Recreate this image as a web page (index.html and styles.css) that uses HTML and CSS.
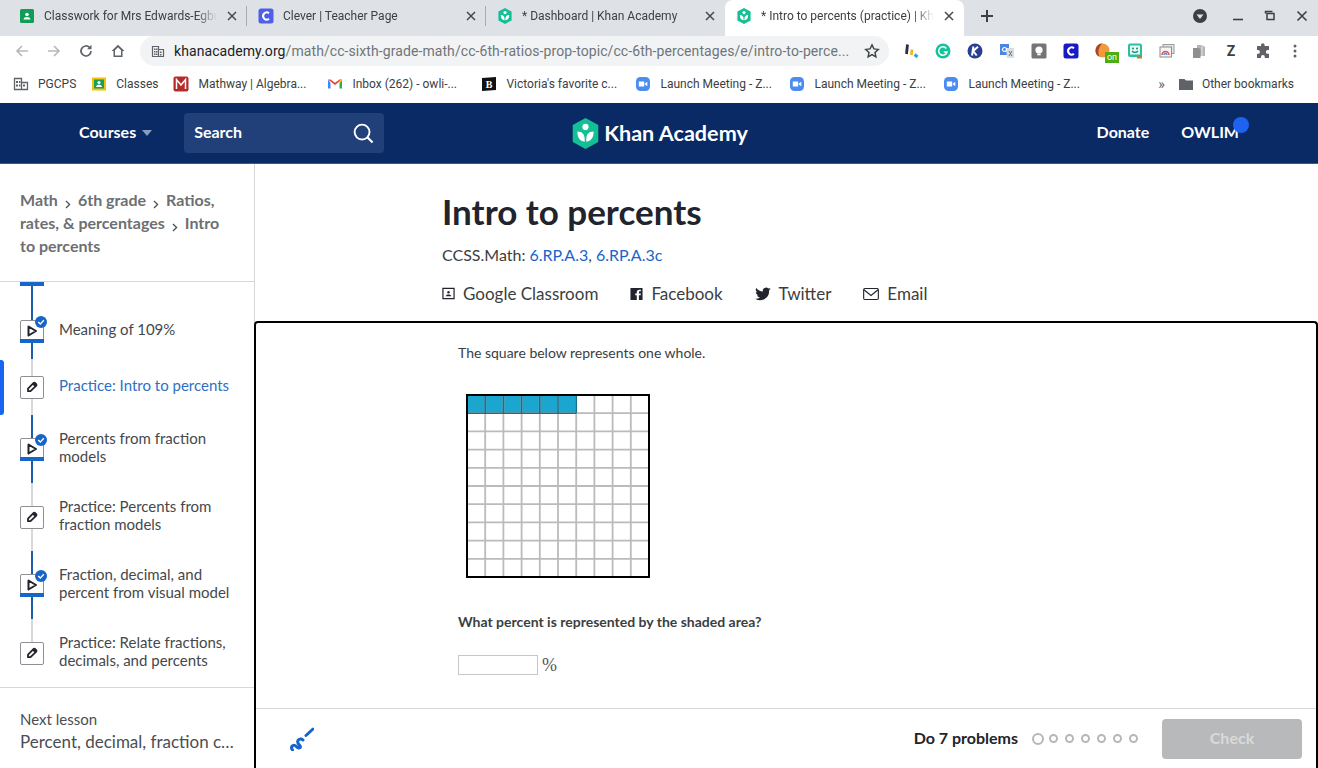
FILE: index.html
```html
<!DOCTYPE html>
<html lang="en">
<head>
<meta charset="utf-8">
<title>Intro to percents (practice) | Khan Academy</title>
<link rel="stylesheet" href="styles.css">
</head>
<body>
<svg class="defs" aria-hidden="true">
  <symbol id="x" viewBox="0 0 12 12"><path d="M2 2l8 8M10 2l-8 8" fill="none" stroke="#45484c" stroke-width="1.5"/></symbol>
  <symbol id="ka" viewBox="0 0 16 16"><path d="M8 0l6.600 3.600v8.800L8 16l-6.600-3.600V3.600z" fill="#14bf96"/><circle cx="8" cy="4.600" r="1.600" fill="#fff"/><path d="M3.800 7c2.400 0 3.800 1.400 3.800 4v1.200C5 12 3.800 10 3.800 7zM12.200 7c-2.400 0-3.800 1.400-3.800 4v1.200C11 12 12.200 10 12.200 7z" fill="#fff"/></symbol>
  <symbol id="zoom" viewBox="0 0 16 16"><rect x="1" y="1" width="14" height="14" rx="4.500" fill="#4a8cf0"/><path d="M3.800 5.600h5.400v4.800H3.800zM9.900 7.600l2.400-1.800v4.400L9.900 8.400z" fill="#fff"/></symbol>
  <symbol id="check" viewBox="0 0 12 12"><circle cx="6" cy="6" r="6" fill="#1865c9"/><path d="M3.300 6.100l2 2 3.500-3.800" fill="none" stroke="#fff" stroke-width="1.400"/></symbol>
  <symbol id="play" viewBox="0 0 12 12"><path d="M2.500 1.500l7.500 4.500-7.500 4.500z" fill="none" stroke="#21242c" stroke-width="2" stroke-linejoin="round"/></symbol>
  <symbol id="pencil" viewBox="0 0 12 12"><path d="M2 7.600L7.400 2.200a1.300 1.300 0 0 1 1.800 0l.8.8a1.300 1.300 0 0 1 0 1.800L4.500 10.200H2z" fill="none" stroke="#21242c" stroke-width="1.800" stroke-linejoin="round"/><path d="M6.400 3.400l2.400 2.400L10 4.600a1.200 1.200 0 0 0 0-1.600l-1-1a1.200 1.200 0 0 0-1.600 0z" fill="#21242c"/></symbol>
  <symbol id="chev" viewBox="0 0 6 9"><path d="M1 1l3.600 3.500L1 8" fill="none" stroke="#4b4e52" stroke-width="1.300"/></symbol>
</svg>

<div class="tabstrip">
  <div class="tab">
    <svg class="favicon" viewBox="0 0 16 16"><rect x="1" y="1" width="14" height="14" rx="1.500" fill="#0f9d58"/><circle cx="8" cy="6.500" r="1.800" fill="#fff"/><path d="M4.500 11.500c.4-2 1.800-2.600 3.500-2.600s3.100.6 3.500 2.600z" fill="#fff"/></svg>
    <span class="tab-title">Classwork for Mrs Edwards-Egbuna</span>
    <svg class="tab-x"><use href="#x"/></svg>
  </div>
  <div class="tab-sep"></div>
  <div class="tab">
    <svg class="favicon" viewBox="0 0 16 16"><rect x="0.500" y="0.500" width="15" height="15" rx="2.500" fill="#4f5fe8"/><path d="M11 5.200A3.600 3.600 0 1 0 11 10.800" fill="none" stroke="#fff" stroke-width="2"/></svg>
    <span class="tab-title">Clever | Teacher Page</span>
    <svg class="tab-x"><use href="#x"/></svg>
  </div>
  <div class="tab-sep"></div>
  <div class="tab">
    <svg class="favicon"><use href="#ka"/></svg>
    <span class="tab-title">* Dashboard | Khan Academy</span>
    <svg class="tab-x"><use href="#x"/></svg>
  </div>
  <div class="tab tab-active">
    <svg class="favicon"><use href="#ka"/></svg>
    <span class="tab-title">* Intro to percents (practice) | Khan Academy</span>
    <svg class="tab-x"><use href="#x"/></svg>
  </div>
  <svg class="new-tab" viewBox="0 0 14 14"><path d="M7 1v12M1 7h12" stroke="#3c4043" stroke-width="2"/></svg>
  <div class="win-controls">
    <svg class="win-profile" viewBox="0 0 16 16"><circle cx="8" cy="8" r="7" fill="#3c4043"/><path d="M4.500 6.500h7L8 11z" fill="#dee1e6"/></svg>
    <svg class="win-btn" viewBox="0 0 12 12"><path d="M1 9.500h10" stroke="#3c4043" stroke-width="1.600"/></svg>
    <svg class="win-btn" viewBox="0 0 12 12"><path d="M3 3.500h7v6H3zM1.500 3.500v-2h7" fill="none" stroke="#3c4043" stroke-width="1.500"/></svg>
    <svg class="win-btn" viewBox="0 0 12 12"><path d="M1.500 1.500l9 9M10.500 1.500l-9 9" stroke="#3c4043" stroke-width="1.600"/></svg>
  </div>
</div>

<div class="toolbar">
  <div class="tool"><svg class="tool-icon" viewBox="0 0 16 16"><path d="M14 8H3M8 3L3 8l5 5" fill="none" stroke="#b6b9bd" stroke-width="1.700"/></svg></div>
  <div class="tool"><svg class="tool-icon" viewBox="0 0 16 16"><path d="M2 8h11M8 3l5 5-5 5" fill="none" stroke="#b6b9bd" stroke-width="1.700"/></svg></div>
  <div class="tool"><svg class="tool-icon" viewBox="0 0 16 16"><path d="M13 8a5 5 0 1 1-1.500-3.600" fill="none" stroke="#5f6368" stroke-width="1.700"/><path d="M13.500 1.800v4.400H9.100z" fill="#5f6368"/></svg></div>
  <div class="tool"><svg class="tool-icon" viewBox="0 0 16 16"><path d="M8 1.800L1.500 8h2v6h9V8h2zM5 12.500V7.200l3-2.900 3 2.900v5.300z" fill="#5f6368"/></svg></div>
  <div class="omnibox">
    <svg class="omni-lock" viewBox="0 0 14 14"><path d="M1.500 12.500v-10h6v10zM7.500 5.500h5v7h-5z" fill="none" stroke="#5f6368" stroke-width="1.200"/><path d="M3 4.500h1.500V6H3zM5 4.500h1.500V6H5zM3 7h1.500v1.500H3zM5 7h1.500v1.500H5zM3 9.500h1.500V11H3zM5 9.500h1.500V11H5zM9 7.500h1.500V9H9zM9 10h1.500v1.500H9z" fill="#5f6368"/></svg>
    <span class="url"><span class="url-host">khanacademy.org</span>/math/cc-sixth-grade-math/cc-6th-ratios-prop-topic/cc-6th-percentages/e/intro-to-perce...</span>
    <svg class="omni-star" viewBox="0 0 16 16"><path d="M8 1.800l1.900 4.100 4.400.5-3.300 3 .9 4.400L8 11.600l-3.900 2.200.9-4.400-3.300-3 4.400-.5z" fill="none" stroke="#3c4043" stroke-width="1.400"/></svg>
  </div>
  <div class="exts">
    <div class="tool"><svg class="tool-icon" viewBox="0 0 16 16"><path d="M4.500 1.500L3.500 11" stroke="#2b2d42" stroke-width="2.800" fill="none"/><path d="M9 6.500l-.6 5.500" stroke="#f2b01e" stroke-width="2.600" fill="none"/><path d="M11.500 11.500l3 2.500" stroke="#2fa6d8" stroke-width="3" fill="none"/></svg></div>
    <div class="tool"><svg class="tool-icon" viewBox="0 0 16 16"><circle cx="8" cy="8" r="7.500" fill="#15c39a"/><path d="M11.300 5.500A4.200 4.200 0 1 0 12 9H8.800" fill="none" stroke="#fff" stroke-width="1.500"/></svg></div>
    <div class="tool"><svg class="tool-icon" viewBox="0 0 16 16"><circle cx="8" cy="8" r="7.500" fill="#2a3f8f"/><path d="M6.400 3.500L5 12.500M11 3.800L6.200 8l3.500 4.500" fill="none" stroke="#fff" stroke-width="2"/></svg></div>
    <div class="tool"><svg class="tool-icon" viewBox="0 0 16 16"><rect x="1" y="1" width="9" height="11" fill="#4a86e8"/><path d="M7 5h8v10H8z" fill="#d9dce0"/><path d="M10 8l3 5M13 8l-3 5" stroke="#70757a" stroke-width="1"/><circle cx="5.500" cy="6.500" r="2" fill="none" stroke="#fff" stroke-width="1.200"/></svg></div>
    <div class="tool"><svg class="tool-icon" viewBox="0 0 16 16"><rect x="0.500" y="0.500" width="15" height="15" rx="1.500" fill="#757575"/><circle cx="8" cy="7" r="3.600" fill="#fff"/><rect x="6.300" y="10.500" width="3.400" height="1.800" fill="#fff"/></svg></div>
    <div class="tool"><svg class="tool-icon" viewBox="0 0 16 16"><rect x="0.500" y="0.500" width="15" height="15" rx="2.500" fill="#1a1ac4"/><path d="M11 5.200A3.600 3.600 0 1 0 11 10.800" fill="none" stroke="#fff" stroke-width="2"/></svg></div>
    <div class="tool ext-on"><svg class="tool-icon" viewBox="0 0 16 16"><circle cx="7.500" cy="7.500" r="7" fill="#f09a3e"/><path d="M7.500.5a7 7 0 0 0-3 13.300C2 9 4 3 7.500.5z" fill="#a8452a"/></svg><span class="on-badge">on</span></div>
    <div class="tool"><svg class="tool-icon" viewBox="0 0 16 16"><rect x="1" y="0.500" width="14" height="13.500" rx="2" fill="#2bbf9e"/><rect x="3" y="2.500" width="10" height="9" fill="#e8faf5"/><circle cx="6" cy="5.500" r="1" fill="#1a8f75"/><circle cx="10" cy="5.500" r="1" fill="#1a8f75"/><path d="M5 8c1.500 1.800 4.500 1.800 6 0" fill="none" stroke="#1a8f75" stroke-width="1.200"/><path d="M10 12h5v3.500h-5z" fill="#a98a3a"/></svg></div>
    <div class="tool"><svg class="tool-icon" viewBox="0 0 16 16"><rect x="4" y="1.500" width="11" height="9" fill="#e3e4e6" stroke="#9a9ca0"/><rect x="1" y="4" width="11.500" height="10" fill="#f5f5f5" stroke="#8a8c90"/><path d="M3 12a3.500 3.500 0 0 1 7 0" fill="none" stroke="#d9534f" stroke-width="1.500"/><path d="M5 12a1.500 1.500 0 0 1 3 0" fill="none" stroke="#4a86e8" stroke-width="1.300"/></svg></div>
    <div class="tool"><svg class="tool-icon" viewBox="0 0 16 16"><path d="M6 2h5l3 2v9H6z" fill="#b5b5b5"/><path d="M2 5h6l1.500 1.500V15H2z" fill="#8f8f8f"/><path d="M11 2v11" stroke="#e5e5e5"/></svg></div>
    <div class="tool tool-z">Z</div>
    <div class="tool"><svg class="tool-icon" viewBox="0 0 16 16"><path d="M6 2a1.800 1.800 0 0 1 3.600 0v1H14v4h-1.200a1.900 1.900 0 0 0 0 3.800H14V15H9.800v-1a1.900 1.900 0 0 0-3.800 0v1H2v-4.200h1a1.900 1.900 0 0 0 0-3.800H2V3h4z" fill="#5f6368"/></svg></div>
    <div class="tool"><svg class="tool-icon" viewBox="0 0 16 16"><circle cx="8" cy="3" r="1.500" fill="#5f6368"/><circle cx="8" cy="8" r="1.500" fill="#5f6368"/><circle cx="8" cy="13" r="1.500" fill="#5f6368"/></svg></div>
  </div>
</div>

<div class="bookmarks">
  <div class="bm"><svg class="favicon" viewBox="0 0 16 16"><path d="M1.500 13.500v-11h7v11zM8.500 6.500h6v7h-6z" fill="none" stroke="#5f6368" stroke-width="1.300"/><path d="M3 5h2v2H3zM6 5h1.500v2H6zM3 8.500h2v2H3zM6 8.500h1.500v2H6zM10 8.500h2v2h-2z" fill="#5f6368"/></svg><span>PGCPS</span></div>
  <div class="bm"><svg class="favicon" viewBox="0 0 16 16"><rect x="1" y="1.500" width="14" height="13" fill="#f4c20d"/><rect x="3" y="3.500" width="10" height="9" fill="#1b9e5a"/><circle cx="8" cy="6.500" r="1.500" fill="#fff"/><path d="M5 11c.3-1.700 1.400-2.300 3-2.300s2.700.6 3 2.300z" fill="#fff"/></svg><span>Classes</span></div>
  <div class="bm bm-long"><svg class="favicon" viewBox="0 0 16 16"><rect x="0.500" y="0.500" width="15" height="15" rx="2" fill="#b62a2a"/><path d="M3.500 13V3.500L8 9l4.500-5.500V13" fill="none" stroke="#fff" stroke-width="1.500"/></svg><span>Mathway | Algebra...</span></div>
  <div class="bm bm-long"><svg class="favicon" viewBox="0 0 16 16"><path d="M1 3.500v9h2.500V7z" fill="#4285f4"/><path d="M15 3.500v9h-2.500V7z" fill="#34a853"/><path d="M1 3.500L8 9l7-5.500-2.500 0L8 6.800 3.500 3.500z" fill="#ea4335"/><path d="M12.500 3.300L15 3.500V5l-2.500 2z" fill="#fbbc05"/></svg><span>Inbox (262) - owli-...</span></div>
  <div class="bm bm-long"><svg class="favicon" viewBox="0 0 16 16"><path d="M1 2l14-1v13L1 15z" fill="#111"/><text x="8" y="12" class="blooket">B</text></svg><span>Victoria's favorite c...</span></div>
  <div class="bm bm-long"><svg class="favicon"><use href="#zoom"/></svg><span>Launch Meeting - Z...</span></div>
  <div class="bm bm-long"><svg class="favicon"><use href="#zoom"/></svg><span>Launch Meeting - Z...</span></div>
  <div class="bm bm-long"><svg class="favicon"><use href="#zoom"/></svg><span>Launch Meeting - Z...</span></div>
  <span class="bm-more">»</span>
  <div class="bm bm-other"><svg class="favicon" viewBox="0 0 16 16"><path d="M1 3h5.500L8 4.500h7V14H1z" fill="#5f6368"/></svg><span>Other bookmarks</span></div>
</div>

<header class="nav">
  <div class="nav-left">
    <span class="nav-courses">Courses</span>
    <span class="caret"></span>
    <div class="search">
      <span class="search-label">Search</span>
      <svg class="search-icon" viewBox="0 0 22 22"><circle cx="9.500" cy="9.500" r="7.800" fill="none" stroke="#fff" stroke-width="2"/><path d="M15 15l5.500 5.500" stroke="#fff" stroke-width="2.200"/></svg>
    </div>
  </div>
  <div class="logo">
    <svg class="logo-mark"><use href="#ka"/></svg>
    <span>Khan Academy</span>
  </div>
  <div class="nav-right">
    <span>Donate</span>
    <span class="user">OWLIM<span class="user-dot"></span></span>
  </div>
</header>

<div class="page">
  <aside class="sidebar">
    <nav class="crumbs">Math<svg class="chev"><use href="#chev"/></svg>6th grade<svg class="chev"><use href="#chev"/></svg>Ratios, rates, &amp; percentages<svg class="chev"><use href="#chev"/></svg>Intro to percents</nav>
    <div class="lessons">
      <div class="stub"><span class="stub-cap"></span><span class="seg seg-blue"></span></div>

      <div class="lesson">
        <div class="rail"><span class="seg seg-blue"></span><div class="box box-done"><svg class="box-icon"><use href="#play"/></svg><svg class="badge"><use href="#check"/></svg></div><span class="seg seg-blue"></span></div>
        <span class="lesson-text">Meaning of 109%</span>
      </div>

      <div class="lesson lesson-active">
        <div class="rail"><span class="seg seg-grey"></span><div class="box"><svg class="box-icon"><use href="#pencil"/></svg></div><span class="seg seg-grey"></span></div>
        <span class="lesson-text">Practice: Intro to percents</span>
      </div>

      <div class="lesson">
        <div class="rail"><span class="seg seg-blue"></span><div class="box box-done"><svg class="box-icon"><use href="#play"/></svg><svg class="badge"><use href="#check"/></svg></div><span class="seg seg-blue"></span></div>
        <span class="lesson-text">Percents from fraction models</span>
      </div>

      <div class="lesson">
        <div class="rail"><span class="seg seg-grey"></span><div class="box"><svg class="box-icon"><use href="#pencil"/></svg></div><span class="seg seg-grey"></span></div>
        <span class="lesson-text">Practice: Percents from fraction models</span>
      </div>

      <div class="lesson">
        <div class="rail"><span class="seg seg-blue"></span><div class="box box-done"><svg class="box-icon"><use href="#play"/></svg><svg class="badge"><use href="#check"/></svg></div><span class="seg seg-blue"></span></div>
        <span class="lesson-text">Fraction, decimal, and percent from visual model</span>
      </div>

      <div class="lesson">
        <div class="rail"><span class="seg seg-grey"></span><div class="box"><svg class="box-icon"><use href="#pencil"/></svg></div><span class="seg"></span></div>
        <span class="lesson-text">Practice: Relate fractions, decimals, and percents</span>
      </div>
    </div>
    <div class="next">
      <div class="next-label">Next lesson</div>
      <div class="next-title">Percent, decimal, fraction conversions</div>
    </div>
  </aside>

  <main class="content">
    <div class="head">
      <h1 class="title">Intro to percents</h1>
      <div class="ccss">CCSS.Math: <a class="link">6.RP.A.3</a>, <a class="link">6.RP.A.3c</a></div>
      <div class="share">
        <span class="share-item"><svg class="share-icon gc" viewBox="0 0 14 14"><path d="M1 1h12v11H1z" fill="none" stroke="#21242c" stroke-width="1.300"/><circle cx="7" cy="5.200" r="1.300" fill="#21242c"/><path d="M4 9.500c.3-1.400 1.400-1.900 3-1.900s2.700.5 3 1.900z" fill="#21242c"/></svg>Google Classroom</span>
        <span class="share-item"><svg class="share-icon gc" viewBox="0 0 14 14"><path d="M0.500 0.500h13v13H9.600V8.400h1.800l.3-2H9.600V5.100c0-.7.3-1 1-1h1.100V2.400H10c-1.800 0-2.700 1-2.700 2.600v1.400H5.600v2h1.700v5.100H0.500z" fill="#21242c"/></svg>Facebook</span>
        <span class="share-item"><svg class="share-icon tw" viewBox="0 0 16 14"><path d="M15.800 2a6.300 6.300 0 0 1-1.800.5A3.200 3.200 0 0 0 15.400.8a6.400 6.400 0 0 1-2 .8 3.200 3.200 0 0 0-5.500 2.900A9 9 0 0 1 1.300 1a3.200 3.200 0 0 0 1 4.300 3.100 3.100 0 0 1-1.500-.4c0 1.600 1.100 2.900 2.600 3.200a3.200 3.200 0 0 1-1.500 0 3.200 3.200 0 0 0 3 2.300A6.400 6.400 0 0 1 .2 11.700a9 9 0 0 0 13.900-8v-.4A6.500 6.500 0 0 0 15.800 2z" fill="#21242c"/></svg>Twitter</span>
        <span class="share-item"><svg class="share-icon tw" viewBox="0 0 17 14"><rect x="0.700" y="1.200" width="15.600" height="11.600" rx="1.300" fill="none" stroke="#21242c" stroke-width="1.200"/><path d="M1 2.500l7.500 6 7.500-6" fill="none" stroke="#21242c" stroke-width="1.200"/></svg>Email</span>
      </div>
    </div>

    <section class="exercise">
      <div class="problem">
        <p class="prompt">The square below represents one whole.</p>
        <svg class="grid" viewBox="0 0 184 184">
          <rect x="1" y="1" width="109.200" height="18.200" fill="#1ba6cf"/>
          <path d="M19.200 1V183M37.400 1V183M55.600 1V183M73.800 1V183M92 1V183M110.200 1V183M128.400 1V183M146.600 1V183M164.800 1V183M1 19.200H183M1 37.400H183M1 55.600H183M1 73.800H183M1 92H183M1 110.200H183M1 128.400H183M1 146.600H183M1 164.800H183" stroke="#bbb" stroke-width="1.800" fill="none"/>
          <path d="M19.200 1V19.200M37.400 1V19.200M55.600 1V19.200M73.800 1V19.200M92 1V19.200M110.200 1V19.200M1 19.200H110.200" stroke="#1b6f8c" stroke-width="1.600" fill="none"/>
          <rect x="1" y="1" width="182" height="182" fill="none" stroke="#000" stroke-width="2"/>
        </svg>
        <p class="question">What percent is represented by the shaded area?</p>
        <div class="answer"><input class="answer-input" type="text" aria-label="Percent"><span class="percent">%</span></div>
      </div>
      <footer class="foot">
        <svg class="scratch" viewBox="0 0 24 24"><path d="M16 8.500L23 2" stroke="#1865c9" stroke-width="3" stroke-linecap="round" fill="none"/><path d="M2.500 23C0 20 3 17.500 5 18.500S8 22 10 20.500c2-1.500-4-3.500-2-7 1-1.800 3.500-2 5-.5" stroke="#1865c9" stroke-width="3" stroke-linecap="round" fill="none"/></svg>
        <span class="do">Do 7 problems</span>
        <div class="dots"><span class="dot dot-big"></span><span class="dot"></span><span class="dot"></span><span class="dot"></span><span class="dot"></span><span class="dot"></span><span class="dot"></span></div>
        <button class="check" type="button">Check</button>
      </footer>
    </section>
  </main>
</div>
</body>
</html>
```
FILE: styles.css
```css
* { box-sizing: border-box; }
html, body { margin: 0; height: 768px; overflow: hidden; background: #fff; }
body { display: flex; flex-direction: column; font-family: "Lato", "Liberation Sans", sans-serif; color: #21242c; }
.defs { display: none; }

/* Browser chrome */
.tabstrip { display: flex; align-items: center; height: 36px; flex: none; padding-left: 8px; background: #dee1e6; font: 12px "Roboto", "Liberation Sans", sans-serif; color: #3c4043; }
.tab { display: flex; align-items: center; width: 239px; height: 36px; padding: 0 8px 4px 11px; }
.tab-sep { width: 1px; height: 20px; margin: 0 0 4px -1px; background: #a9acb1; flex: none; }
.tab-active { background: #fff; border-radius: 8px 8px 0 0; }
.favicon { width: 16px; height: 16px; flex: none; }
.tab-title { flex: 1; min-width: 0; margin: 0 9px 0 9px; white-space: nowrap; overflow: hidden; -webkit-mask-image: linear-gradient(90deg, #000 88%, transparent); mask-image: linear-gradient(90deg, #000 88%, transparent); }
.tab-x { width: 12px; height: 12px; flex: none; margin-right: 1px; }
.new-tab { width: 14px; height: 14px; margin: 0 0 4px 16px; flex: none; }
.win-controls { display: flex; align-items: center; margin: 0 0 4px auto; padding-right: 10px; }
.win-profile { width: 16px; height: 16px; margin-right: 24px; }
.win-btn { width: 12px; height: 12px; margin-left: 20px; }
.win-profile + .win-btn { margin-left: 0; }

.toolbar { display: flex; align-items: center; height: 30px; flex: none; padding-left: 6px; background: #fff; }
.tool { width: 32px; height: 28px; display: flex; align-items: center; justify-content: center; flex: none; position: relative; }
.tool-icon { width: 16px; height: 16px; }
.tool-z { font: 700 14px "Roboto", "Liberation Sans", sans-serif; color: #3c4043; }
.omnibox { display: flex; align-items: center; width: 749px; height: 30px; margin-left: 6px; padding: 0 9px 0 11px; background: #f1f3f4; border-radius: 15px; font: 14px "Roboto", "Liberation Sans", sans-serif; letter-spacing: 0.08px; color: #70757a; }
.omni-lock { width: 14px; height: 14px; flex: none; }
.url { flex: 1; margin-left: 9px; white-space: nowrap; overflow: hidden; }
.url-host { color: #202124; }
.omni-star { width: 16px; height: 16px; flex: none; }
.exts { display: flex; margin-left: 6px; }
.on-badge { position: absolute; left: 18px; top: 15px; width: 14px; height: 11px; background: #4cae10; color: #fff; font: 9px/11px "Roboto", sans-serif; text-align: center; }

.bookmarks { display: flex; align-items: center; height: 37px; flex: none; padding: 0 24px 2px 13px; background: #fff; font: 12px "Roboto", "Liberation Sans", sans-serif; color: #3c4043; }
.bm { display: flex; align-items: center; gap: 9px; margin-right: 15px; white-space: nowrap; flex: none; }
.bm-long { width: 154px; margin-right: 0; }
.bm-more { margin-left: auto; margin-right: 13px; font-size: 14px; color: #5f6368; }
.bm-other { margin-right: 0; gap: 8px; }
.blooket { font: 700 10px "Liberation Serif", serif; fill: #fff; text-anchor: middle; }

/* Site nav */
.nav { display: grid; grid-template-columns: 1fr auto 1fr; align-items: center; height: 61px; flex: none; padding: 0 79px; background: #0a2a66; border-bottom: 1px solid #44597f; color: #fff; font-size: 16px; font-weight: 700; }
.nav-left { display: flex; align-items: center; }
.nav-courses, .search-label { padding-bottom: 4px; }
.caret { width: 0; height: 0; margin-left: 6px; border: 5px solid transparent; border-top: 6px solid #8a9bbd; border-bottom: 0; }
.search { display: flex; align-items: center; justify-content: space-between; width: 200px; height: 40px; margin-left: 32px; padding: 0 10px; background: #21407a; border-radius: 4px; font-size: 16px; }
.search-icon { width: 21px; height: 21px; }
.logo { display: flex; align-items: center; gap: 3px; font-size: 21.600px; }
.logo-mark { width: 31px; height: 31px; }
.nav-right { display: flex; justify-content: flex-end; gap: 32px; padding-bottom: 4px; }
.user { position: relative; }
.user-dot { position: absolute; left: 52px; top: -5px; width: 16px; height: 16px; border-radius: 50%; background: #1d63f0; }

/* Page */
.page { display: flex; flex: 1; min-height: 0; }
.sidebar { display: flex; flex-direction: column; width: 255px; flex: none; border-right: 1px solid #d6d8da; }
.crumbs { padding: 24px 20px 24px; border-bottom: 1px solid #d6d8da; font-size: 16px; line-height: 23px; font-weight: 700; color: #6d6f73; }
.chev { width: 6px; height: 9px; margin: 0 7px; vertical-align: -3px; }
.lessons { height: 406px; flex: none; overflow: hidden; border-bottom: 1px solid #d6d8da; }
.stub { display: flex; flex-direction: column; align-items: center; width: 24px; height: 21px; margin-left: 20px; }
.stub-cap { width: 24px; height: 4px; background: #1865c9; flex: none; }
.lesson { display: flex; align-items: stretch; gap: 15px; min-height: 56px; padding: 0 20px; position: relative; }
.lesson-active::before { content: ""; position: absolute; left: 0; top: 1px; bottom: 0; width: 4px; border-radius: 0 3px 3px 0; background: #1865f2; }
.rail { display: flex; flex-direction: column; align-items: center; width: 24px; flex: none; }
.seg { width: 2px; flex: 1; }
.seg-blue { background: #1c5fa8; }
.seg-grey { background: #d6d8da; }
.box { position: relative; width: 24px; height: 23px; flex: none; display: flex; align-items: center; justify-content: center; background: #fff; border: 1px solid #8d8f93; border-radius: 2px; }
.box-done { border-radius: 2px 2px 0 0; }
.box-done::after { content: ""; position: absolute; left: -1px; right: -1px; bottom: -1px; height: 4px; background: #1865c9; }
.box-icon { width: 12px; height: 12px; }
.badge { position: absolute; right: -4px; top: -5px; width: 12px; height: 12px; }
.lesson-text { align-self: center; padding: 14px 0 18px; font-size: 15px; line-height: 18px; color: #45484b; }
.lesson-active .lesson-text { color: #2f6fc4; }
.next { padding: 22px 20px 0; }
.next-label { font-size: 15px; line-height: 18px; color: #4b4e52; }
.next-title { margin-top: 3px; font-size: 17px; line-height: 22px; color: #4b4e52; white-space: nowrap; overflow: hidden; text-overflow: ellipsis; }

.content { flex: 1; min-width: 0; display: flex; flex-direction: column; }
.head { padding: 27px 0 15px 187px; flex: none; }
.title { margin: 0; font-size: 35px; line-height: 40px; font-weight: 700; color: #21242c; }
.ccss { margin-top: 14px; font-size: 16px; line-height: 20px; color: #3b3e40; }
.link { color: #1865c9; }
.share { display: flex; gap: 32px; margin-top: 17px; font-size: 17px; line-height: 24px; color: #3b3e40; }
.share-item { display: flex; align-items: center; gap: 8px; }
.share-icon.gc { width: 13px; height: 14px; }
.share-icon.tw { width: 16px; height: 14px; }

.exercise { flex: 1; min-height: 0; display: flex; flex-direction: column; border: 2px solid #000; border-bottom: 0; border-radius: 4px 4px 0 0; margin-left: -1px; }
.problem { flex: 1; min-height: 0; padding: 20px 0 0 202px; }
.prompt { margin: 0; font-size: 14px; line-height: 20px; color: #3b3e40; }
.grid { display: block; width: 184px; height: 184px; margin: 31px 0 0 8px; }
.question { margin: 34px 0 0; font-size: 14px; line-height: 20px; font-weight: 700; color: #3b3e40; }
.answer { display: flex; align-items: center; gap: 4px; height: 20px; margin-top: 23px; }
.answer-input { width: 80px; height: 20px; padding: 0; border: 1px solid #c4c6c8; background: #fff; }
.percent { font: 18px "Liberation Serif", serif; color: #555; }

.foot { display: flex; align-items: center; height: 60px; flex: none; padding: 0 14px 0 34px; border-top: 1px solid #d6d8da; }
.scratch { width: 24px; height: 24px; }
.do { margin: 0 0 2px auto; font-size: 16px; font-weight: 700; color: #21242c; }
.dots { display: flex; align-items: center; gap: 7px; margin: 0 24px 0 14px; }
.dot { width: 9px; height: 9px; border: 2px solid #b5b7ba; border-radius: 50%; }
.dot-big { width: 12px; height: 12px; margin-right: -2px; }
.check { width: 140px; height: 40px; padding: 0 0 2px; border: 0; border-radius: 4px; background: #b8b9ba; color: #d9dadb; font: 700 16px "Lato", sans-serif; }
```
